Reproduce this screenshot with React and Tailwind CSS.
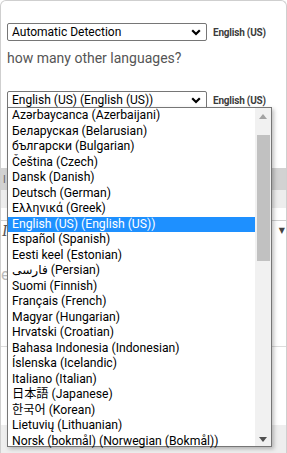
import React from "react";

const items = [
  "Azərbaycanca (Azerbaijani)",
  "Беларуская (Belarusian)",
  "български (Bulgarian)",
  "Čeština (Czech)",
  "Dansk (Danish)",
  "Deutsch (German)",
  "Ελληνικά (Greek)",
  "English (US) (English (US))",
  "Español (Spanish)",
  "Eesti keel (Estonian)",
  "فارسی (Persian)",
  "Suomi (Finnish)",
  "Français (French)",
  "Magyar (Hungarian)",
  "Hrvatski (Croatian)",
  "Bahasa Indonesia (Indonesian)",
  "Íslenska (Icelandic)",
  "Italiano (Italian)",
  "日本語 (Japanese)",
  "한국어 (Korean)",
  "Lietuvių (Lithuanian)",
  "Norsk (bokmål) (Norwegian (Bokmål))",
];

const FONT = {
  fontFamily:
    'Roboto, "DejaVu Sans", "Noto Sans CJK JP", "Noto Sans CJK KR", sans-serif',
};

function Chevron() {
  return (
    <svg width="10" height="7" viewBox="0 0 10 7">
      <path d="M1.2 1.2 L5 5 L8.8 1.2" fill="none" stroke="#000" strokeWidth="2.2" />
    </svg>
  );
}

function SelectRow({ value }) {
  return (
    <div className="flex items-center">
      <div className="flex h-[18px] w-[200px] items-center justify-between rounded-[2px] border border-[#767676] bg-white pl-[4px] pr-[5px] text-[12px] leading-none text-black">
        <span>{value}</span>
        <Chevron />
      </div>
      <span className="ml-[6px] text-[10px] font-bold tracking-[-0.2px] text-[#3c3c3c]">English (US)</span>
    </div>
  );
}

export default function App() {
  return (
    <div
      className="relative h-[453px] w-[287px] overflow-hidden bg-white"
      style={FONT}
    >
      <div className="flex h-full flex-col rounded-t-[6px] border border-b-0 border-[#cfcfcf]">
        <div className="pl-[6px] pt-[22px]">
          <SelectRow value="Automatic Detection" />
          <p className="mt-[7px] text-[14px] leading-[20px] text-[#555]">how many other languages?</p>
          <div className="mt-[23px]">
            <SelectRow value="English (US) (English (US))" />
          </div>
        </div>
        <div className="mt-[59px] flex h-[22px] items-center bg-[#d2d2d2] pl-[2px] text-[10px] text-[#666]">I</div>
        <div className="h-[18px] bg-[#ededed]" />
        <div className="mt-[12px] h-px bg-[#d0d0d0]" />
        <div className="flex h-[20px] items-center justify-between px-[1px]">
          <span className="font-serif text-[16px] italic text-[#555]">I</span>
          <span className="text-[8px] text-[#444]">▼</span>
        </div>
        <div className="mt-[22px] text-[16px] text-[#bbb]">e</div>
        <div className="mt-[59px] h-px bg-[#dcdcdc]" />
        <div className="mt-auto h-[28px] bg-[#eeeeee]" />
      </div>

      <div className="absolute left-[7px] top-[107px] flex h-[340px] w-[265px] border border-[#767676] bg-white shadow-[2px_2px_4px_rgba(0,0,0,0.25)]">
        <ul className="flex-1 text-[12.2px] leading-[15.5px] text-black">
          {items.map((t) => {
            const sel = t === "English (US) (English (US))";
            return (
              <li
                key={t}
                className={
                  sel
                    ? "whitespace-nowrap bg-[#1e90ff] pl-[4px] text-white"
                    : "whitespace-nowrap pl-[4px]"
                }
              >
                {t}
              </li>
            );
          })}
        </ul>
        <div className="flex w-[16px] flex-col items-center bg-[#f1f1f1]">
          <svg className="mt-[6px]" width="8" height="5" viewBox="0 0 8 5">
            <path d="M0 5 L4 0 L8 5 Z" fill="#a3a3a3" />
          </svg>
          <div className="mt-[16px] h-[126px] w-[13px] bg-[#c1c1c1]" />
          <svg className="mb-[4px] mt-auto" width="8" height="5" viewBox="0 0 8 5">
            <path d="M0 0 L4 5 L8 0 Z" fill="#505050" />
          </svg>
        </div>
      </div>
    </div>
  );
}
